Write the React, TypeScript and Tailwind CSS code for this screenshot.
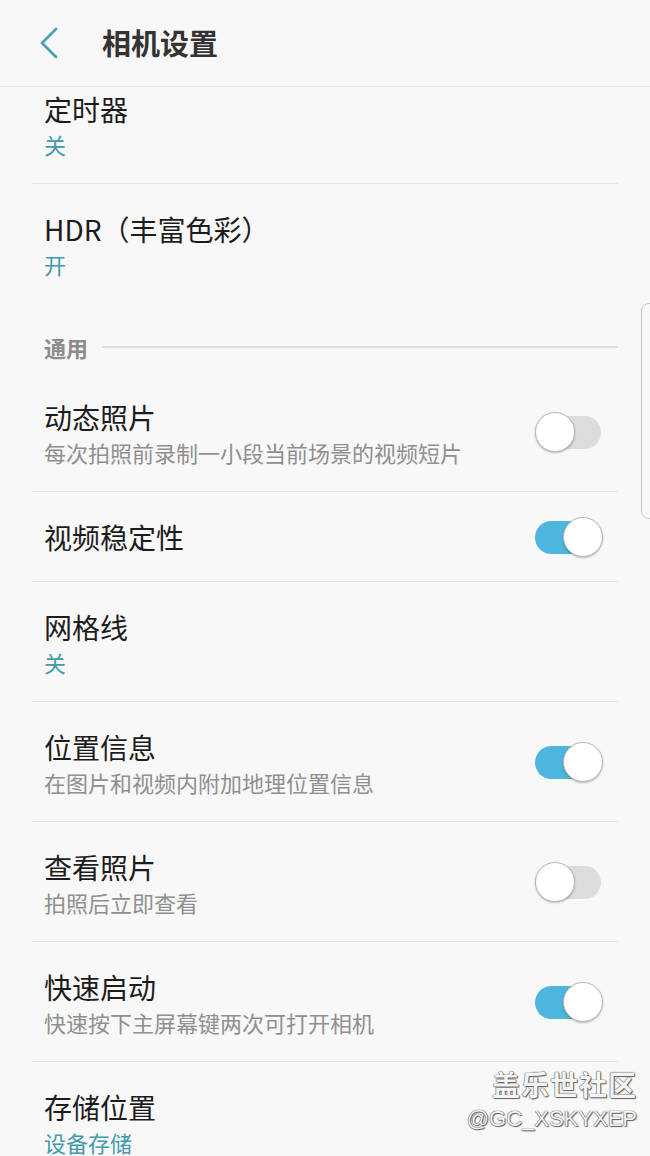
import React from 'react';

// ── Pieces ─────────────────────────────────────────────────────────────

function Toggle({ on }: { on: boolean }) {
  return (
    <div className="relative w-[68px] h-[40px] flex-shrink-0">
      <div
        className={`absolute left-0 top-[4px] w-[66px] h-[33px] rounded-full ${on ? 'bg-[#4db6de]' : 'bg-[#dcdcdc]'}`}
      />
      <div
        className={`absolute top-0 w-[40px] h-[40px] rounded-full bg-white border border-[#b9b9b9] shadow-[0_1px_2px_rgba(0,0,0,0.25)] ${on ? 'left-[28px]' : 'left-0'}`}
      />
    </div>
  );
}

type Row = {
  title: string;
  sub?: string;
  value?: string;
  toggle?: boolean;
};

function SettingRow({ row, last }: { row: Row; last?: boolean }) {
  const twoLine = !!(row.sub || row.value);
  return (
    <div className={`flex items-center pl-[12px] pr-[15px] ${last ? '' : 'border-b border-[#e4e4e4]'} ${twoLine ? 'h-[120px]' : 'h-[90px]'}`}>
      <div className={`flex-1 min-w-0 ${twoLine ? 'pt-[4px]' : ''}`}>
        <div className="text-[28px] leading-[36px] text-[#1c1c1c]">{row.title}</div>
        {row.sub && <div className="text-[22px] leading-[34px] text-[#8f8f8f]">{row.sub}</div>}
        {row.value && <div className="text-[22px] leading-[34px] text-[#4399ad]">{row.value}</div>}
      </div>
      {row.toggle !== undefined && <Toggle on={row.toggle} />}
    </div>
  );
}

// ── Data ───────────────────────────────────────────────────────────────

const top: Row[] = [
  { title: '定时器', value: '关' },
  { title: 'HDR（丰富色彩）', value: '开' },
];

const general: Row[] = [
  { title: '动态照片', sub: '每次拍照前录制一小段当前场景的视频短片', toggle: false },
  { title: '视频稳定性', toggle: true },
  { title: '网格线', value: '关' },
  { title: '位置信息', sub: '在图片和视频内附加地理位置信息', toggle: true },
  { title: '查看照片', sub: '拍照后立即查看', toggle: false },
  { title: '快速启动', sub: '快速按下主屏幕键两次可打开相机', toggle: true },
  { title: '存储位置', value: '设备存储' },
];

// ── Page ───────────────────────────────────────────────────────────────

export default function App() {
  return (
    <div
      className="relative w-[650px] h-[1156px] overflow-hidden bg-[#f8f8f8]"
      style={{ fontFamily: '"Noto Sans CJK SC", "Noto Sans", sans-serif' }}
    >
      <div className="h-[87px] flex items-center border-b border-[#e2e2e2] bg-[#f8f8f8]">
        <svg className="ml-[36px] w-[26px] h-[34px]" viewBox="0 0 26 34" fill="none">
          <path d="M20 3 L6 17 L20 31" stroke="#4d9fb2" strokeWidth="2.8" strokeLinecap="round" strokeLinejoin="round" />
        </svg>
        <div className="ml-[40px] text-[29px] font-bold text-[#333] leading-none pb-[2px]">相机设置</div>
      </div>

      <div className="mx-[32px] mt-[-23px]">
        {top.map((r, i) => (
          <SettingRow key={r.title} row={r} last={i === top.length - 1} />
        ))}

        <div className="h-[68px] flex items-center gap-[14px] pl-[12px] pt-[18px]">
          <span className="text-[22px] leading-[36px] font-bold text-[#8c8c8c]">通用</span>
          <div className="flex-1 h-[2px] bg-[#e0e0e0]" />
        </div>

        {general.map((r) => (
          <SettingRow key={r.title} row={r} />
        ))}
      </div>

      <div className="absolute left-[641px] top-[303px] w-[20px] h-[216px] rounded-l-[8px] border border-[#c4c4c4] bg-[#f8f8f8]" />

      <div className="absolute right-[13px] top-[1066px] flex flex-col items-end text-[#f4f4f4] [text-shadow:0_0_1px_#444,0_0_1px_#444,1px_1px_1px_#666]">
        <div className="text-[28px] leading-[36px] font-bold tracking-[1px]">盖乐世社区</div>
        <div className="text-[22px] leading-[34px]" style={{ fontFamily: '"Liberation Sans", sans-serif' }}>@GC_XSKYXEP</div>
      </div>
    </div>
  );
}
